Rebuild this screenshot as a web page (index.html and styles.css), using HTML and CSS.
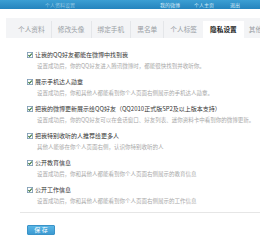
FILE: index.html
```html
<!DOCTYPE html>
<html lang="zh-CN">
<head>
  <meta charset="UTF-8">
  <title>隐私设置</title>
  <link rel="stylesheet" href="styles.css">
</head>
<body>
  <div class="topbar">
    <span class="nav-a">个人资料设置</span>
    <span class="nav-b">我的微博</span>
    <span class="nav-c">个人主页</span>
    <span class="nav-d">退出</span>
  </div>
  <div class="main">
    <ul class="tabs">
      <li>个人资料</li>
      <li>修改头像</li>
      <li>绑定手机</li>
      <li>黑名单</li>
      <li>个人标签</li>
      <li class="active">隐私设置</li>
      <li>其他</li>
    </ul>
    <div class="panel">
      <ul class="opts">
        <li>
          <div class="opt-title"><svg class="chk" viewBox="0 0 7 7"><rect x="0.5" y="0.5" width="6" height="6" fill="#fff" stroke="#7f9db5"/><path d="M1.6 3.6 L3 5 L5.6 1.9" fill="none" stroke="#2f6d2f" stroke-width="1.2"/></svg>让我的QQ好友都能在微博中找到我</div>
          <div class="opt-desc">设置成功后，你的QQ好友进入腾讯微博时，都能很快找到并收听你。</div>
        </li>
        <li>
          <div class="opt-title"><svg class="chk" viewBox="0 0 7 7"><rect x="0.5" y="0.5" width="6" height="6" fill="#fff" stroke="#7f9db5"/><path d="M1.6 3.6 L3 5 L5.6 1.9" fill="none" stroke="#2f6d2f" stroke-width="1.2"/></svg>展示手机达人勋章</div>
          <div class="opt-desc">设置成功后，你和其他人都能看到你个人页面右侧展示的手机达人勋章。</div>
        </li>
        <li>
          <div class="opt-title"><svg class="chk" viewBox="0 0 7 7"><rect x="0.5" y="0.5" width="6" height="6" fill="#fff" stroke="#7f9db5"/><path d="M1.6 3.6 L3 5 L5.6 1.9" fill="none" stroke="#2f6d2f" stroke-width="1.2"/></svg>把我的微博更新展示给QQ好友（QQ2010正式版SP2及以上版本支持）</div>
          <div class="opt-desc">设置成功后，你的QQ好友可以在会话窗口、好友列表、迷你资料卡中看到你的微博更新。</div>
        </li>
        <li>
          <div class="opt-title"><svg class="chk" viewBox="0 0 7 7"><rect x="0.5" y="0.5" width="6" height="6" fill="#fff" stroke="#7f9db5"/><path d="M1.6 3.6 L3 5 L5.6 1.9" fill="none" stroke="#2f6d2f" stroke-width="1.2"/></svg>把我特别收听的人推荐给更多人</div>
          <div class="opt-desc">其他人能够在你个人页面右侧，认识你特别收听的人</div>
        </li>
        <li>
          <div class="opt-title"><svg class="chk" viewBox="0 0 7 7"><rect x="0.5" y="0.5" width="6" height="6" fill="#fff" stroke="#7f9db5"/><path d="M1.6 3.6 L3 5 L5.6 1.9" fill="none" stroke="#2f6d2f" stroke-width="1.2"/></svg>公开教育信息</div>
          <div class="opt-desc">设置成功后，你和其他人都能看到你个人页面右侧展示的教育信息</div>
        </li>
        <li>
          <div class="opt-title"><svg class="chk" viewBox="0 0 7 7"><rect x="0.5" y="0.5" width="6" height="6" fill="#fff" stroke="#7f9db5"/><path d="M1.6 3.6 L3 5 L5.6 1.9" fill="none" stroke="#2f6d2f" stroke-width="1.2"/></svg>公开工作信息</div>
          <div class="opt-desc">设置成功后，你和其他人都能看到你个人页面右侧展示的工作信息</div>
        </li>
      </ul>
      <div class="footer">
        <button class="save">保 存</button>
      </div>
    </div>
  </div>
</body>
</html>
```

FILE: styles.css
```css
* {
  box-sizing: border-box;
}
body {
  margin: 0;
  background: #fff;
  font-family: "Noto Sans CJK SC", "Noto Sans", sans-serif;
  overflow: hidden;
}
.topbar {
  height: 9px;
  background: linear-gradient(to bottom, #3c9fd4, #2584bd);
  display: flex;
  align-items: center;
  color: #d6ecf8;
  font-size: 5px;
  line-height: 7px;
}
.topbar span {
  display: block;
}
.nav-a { margin-left: 45px; opacity: 0.6; }
.nav-b { margin-left: 85px; }
.nav-c { margin-left: 14px; }
.nav-d { margin-left: 16px; }

.main {
  padding: 9px 0 0 6px;
}
.tabs {
  list-style: none;
  margin: 0;
  padding: 3px 0 0 6px;
  height: 20px;
  background: #f3f4f6;
  display: flex;
  white-space: nowrap;
  overflow: hidden;
}
.tabs li {
  font-size: 6.7px;
  line-height: 17px;
  color: #999ea4;
  padding: 0 6px;
  border-left: 1px solid #e4e6e9;
  height: 17px;
}
.tabs li:first-child {
  border-left: none;
}
.tabs li.active {
  background: #fff;
  color: #222;
  font-weight: bold;
  border-left: none;
  padding: 0 7px;
}
.tabs li.active + li {
  border-left: none;
  padding-left: 5px;
}

.panel {
  padding: 12px 0 0 14px;
}
.opts {
  list-style: none;
  margin: 0;
  padding: 0;
}
.opts li {
  height: 21px;
  margin-bottom: 6px;
  white-space: nowrap;
}
.opt-title {
  display: flex;
  align-items: center;
  font-size: 6px;
  line-height: 10px;
  color: #333;
}
.chk {
  width: 6px;
  height: 6px;
  margin: 0 2px 0 7px;
  flex: none;
}
.opt-desc {
  font-size: 5.5px;
  line-height: 10px;
  margin-top: 1px;
  padding-left: 17px;
  color: #a8a8a8;
}
.footer {
  border-top: 1px solid #e6e6e6;
  margin-top: 4px;
  padding: 12px 0 0 7px;
}
.save {
  display: block;
  width: 28px;
  height: 10px;
  padding: 0;
  border: 1px solid #3a93c8;
  border-radius: 1px;
  background: linear-gradient(to bottom, #5ab6e6, #3c9ad2);
  color: #fff;
  font-family: inherit;
  font-size: 6px;
  line-height: 8px;
}
```
